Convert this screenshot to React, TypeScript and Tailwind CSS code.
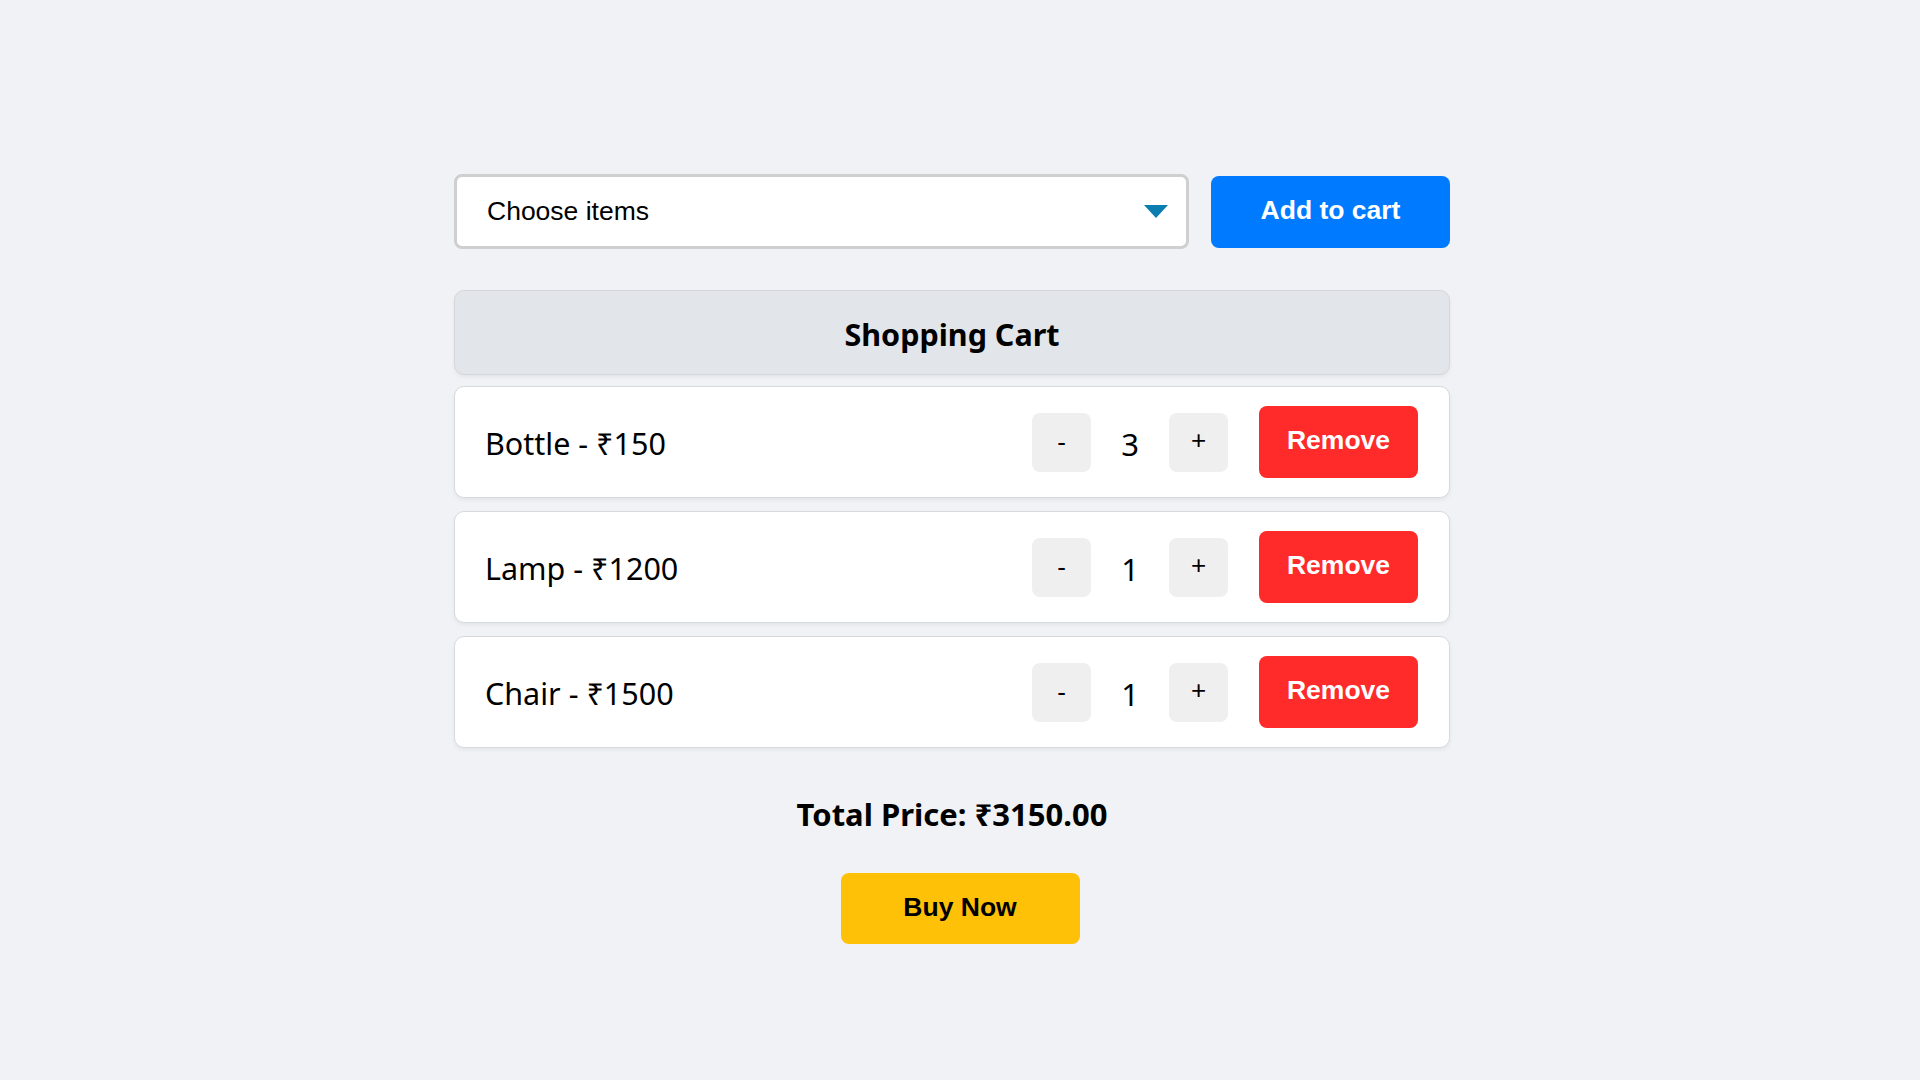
import React from "react";

const items = [
  { name: "Bottle", price: 150, qty: 3 },
  { name: "Lamp", price: 1200, qty: 1 },
  { name: "Chair", price: 1500, qty: 1 },
];

export default function App() {
  return (
    <div className="min-h-screen w-full bg-[#f0f2f5] flex flex-col items-center pt-[174px]">
      <div className="w-[996px] mr-[16px] flex flex-col">
        <div className="flex items-center gap-[22px]">
          <div className="w-[735px] h-[75px] bg-white border-[3px] border-[#cfcfcf] rounded-[8px] flex items-center justify-between pl-[30px] pr-[18px]">
            <span className="text-[26.5px] text-black font-['Liberation_Sans',Arial,sans-serif]">Choose items</span>
            <svg width="24" height="14" viewBox="0 0 24 14">
              <polygon points="0,0 24,0 12,13" fill="#0b7db0" />
            </svg>
          </div>
          <button className="w-[239px] h-[72px] bg-[#007bff] rounded-[8px] text-white font-bold text-[26.5px] flex items-center justify-center pb-[2px] font-['Liberation_Sans',Arial,sans-serif]">
            Add to cart
          </button>
        </div>

        <div className="mt-[41px] h-[85px] bg-[#e2e5ea] border border-[#d3d6db] rounded-[10px] shadow-[0_2px_4px_rgba(0,0,0,0.06)] flex items-center justify-center pt-[4px]">
          <span className="text-[30.5px] font-bold text-black font-['Noto_Sans',sans-serif]">Shopping Cart</span>
        </div>

        <div className="mt-[11px] flex flex-col gap-[13px]">
          {items.map((it) => (
            <div
              key={it.name}
              className="h-[112px] bg-white border border-[#d6d9de] rounded-[10px] shadow-[0_2px_4px_rgba(0,0,0,0.06)] flex items-center justify-between pl-[30px] pr-[31px]"
            >
              <span className="text-[30.5px] text-black pt-[4px] font-['Noto_Sans',sans-serif]">
                {it.name} - ₹{it.price}
              </span>
              <div className="flex items-center">
                <button className="w-[59px] h-[59px] bg-[#efefef] rounded-[8px] text-[26px] text-black flex items-center justify-center font-['Liberation_Sans',Arial,sans-serif]">
                  -
                </button>
                <span className="w-[78px] text-center text-[31px] text-black pt-[4px] font-['Noto_Sans',sans-serif]">
                  {it.qty}
                </span>
                <button className="w-[59px] h-[59px] bg-[#efefef] rounded-[8px] text-[26px] text-black flex items-center justify-center pb-[4px] font-['Liberation_Sans',Arial,sans-serif]">
                  +
                </button>
                <button className="ml-[31px] w-[159px] h-[72px] bg-[#ff2a2a] rounded-[8px] text-white font-bold text-[26.5px] flex items-center justify-center pb-[2px] font-['Liberation_Sans',Arial,sans-serif]">
                  Remove
                </button>
              </div>
            </div>
          ))}
        </div>

        <div className="mt-[43px] text-center text-[31px] font-bold text-black font-['Noto_Sans',sans-serif]">
          Total Price: ₹3150.00
        </div>
      </div>

      <button className="mt-[35px] w-[239px] h-[71px] bg-[#ffc107] rounded-[8px] text-black font-bold text-[26.5px] flex items-center justify-center font-['Liberation_Sans',Arial,sans-serif]">
        Buy Now
      </button>
    </div>
  );
}
